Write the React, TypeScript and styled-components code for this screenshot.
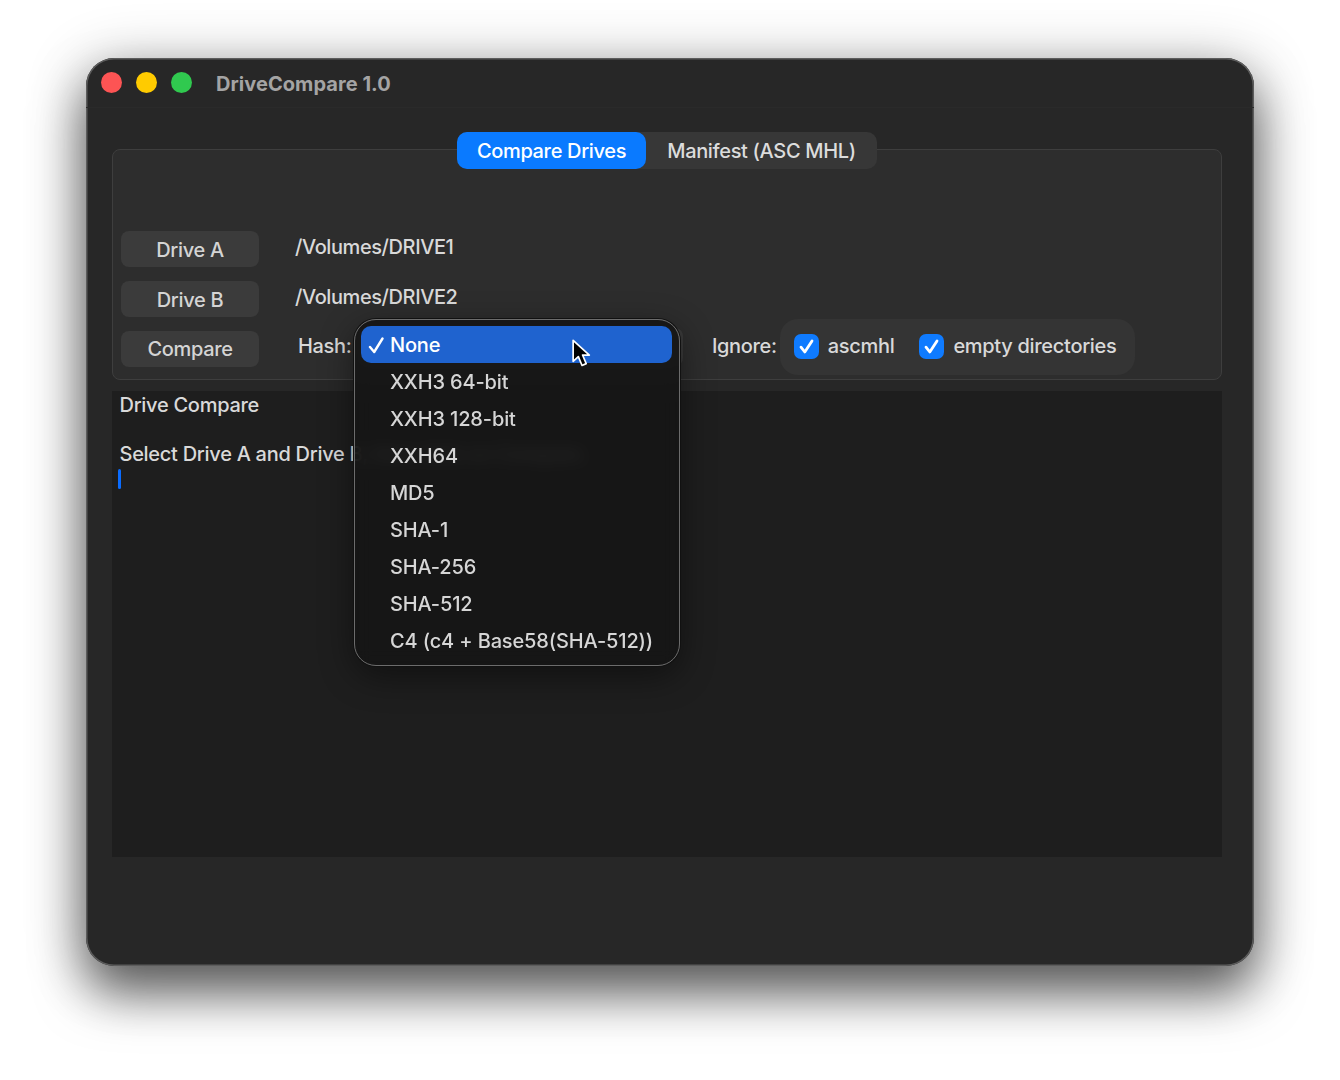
import styled, { createGlobalStyle } from "styled-components";

const GlobalStyle = createGlobalStyle`
    html, body {
        margin: 0;
        padding: 0;
        background: #fff;
        font-family: Inter, "Liberation Sans", sans-serif;
    }
`

const Page = styled.div`
    width: 1340px;
    height: 1080px;
    box-sizing: border-box;
    padding: 58px 86px 114px;
    overflow: hidden;
`

const Window = styled.div`
    height: 908px;
    box-sizing: border-box;
    background: #272727;
    border-radius: 28px;
    box-shadow: inset 0 0 0 1.5px #5c5c5c, 0 28px 50px rgba(0, 0, 0, 0.55), 0 8px 60px rgba(0, 0, 0, 0.3);
    color: #d9d9d9;
    font-size: 20px;
    font-weight: 450;
    letter-spacing: -0.34px;
`

const TitleBar = styled.div`
    height: 50px;
    box-sizing: border-box;
    display: flex;
    align-items: center;
    padding-left: 15px;
    border-bottom: 1px solid #2a2a2a;
`

const Light = styled.span<{ $color: string }>`
    width: 21px;
    height: 21px;
    border-radius: 50%;
    background: ${(p) => p.$color};
    margin-right: 14px;
`

const Title = styled.div`
    margin-left: 10px;
    margin-top: 3px;
    font-size: 20px;
    font-weight: 700;
    letter-spacing: 0.05px;
    color: #a4a4a4;
`

const Content = styled.div`
    padding: 24px 32px 0 26px;
`

const TabBar = styled.div`
    position: relative;
    z-index: 1;
    display: flex;
    justify-content: center;
    margin-bottom: -20px;
`

const TabGroup = styled.div`
    display: flex;
    background: #373737;
    border-radius: 10px;
`

const Tab = styled.div<{ $active?: boolean }>`
    width: ${(p) => (p.$active ? "189px" : "231px")};
    height: 37px;
    line-height: 39px;
    text-align: center;
    background: ${(p) => (p.$active ? "#0a7aff" : "transparent")};
    color: ${(p) => (p.$active ? "#fff" : "#dcdcdc")};
    border-radius: 10px;
`

const Panel = styled.div`
    height: 231px;
    box-sizing: border-box;
    padding: 81px 8px 0;
    background: #2d2d2d;
    border: 1px solid #3e3e3e;
    border-radius: 8px;
`

const Row = styled.div`
    display: flex;
    align-items: center;
    height: 36px;
    margin-bottom: 14px;
`

const ControlRow = styled(Row)`
    height: 56px;
    margin: -13px 0 0;
`

const PushButton = styled.div`
    width: 138px;
    height: 36px;
    line-height: 39px;
    text-align: center;
    background: #3b3b3b;
    color: #d4d4d4;
    border-radius: 8px;
    flex: none;
`

const LowerButton = styled(PushButton)`
    margin-top: 6px;
    line-height: 37px;
`

const PathText = styled.div`
    margin: -4px 0 0 36px;
    letter-spacing: -0.42px;
`

const HashLabel = styled.div`
    margin: 0 6.5px 0 39px;
`

const HashSelect = styled.div`
    position: relative;
    width: 325px;
    height: 38px;
    margin-top: 2px;
    background: #3a3a3a;
    border-radius: 8px;
`

const Popup = styled.div`
    position: absolute;
    z-index: 2;
    left: -4px;
    top: -9px;
    width: 326px;
    height: 347px;
    box-sizing: border-box;
    padding: 6px 7px 6px 6px;
    background: rgba(21, 21, 21, 0.9);
    backdrop-filter: blur(8px);
    border: 1.5px solid #6c6c6c;
    border-radius: 22px;
    box-shadow: 0 0 0 1px #111, 0 10px 34px rgba(0, 0, 0, 0.45);
    letter-spacing: -0.14px;
`

const MenuItem = styled.div<{ $selected?: boolean }>`
    position: relative;
    height: 37px;
    line-height: 39px;
    padding-left: 29px;
    border-radius: 10px;
    background: ${(p) => (p.$selected ? "#1f63cf" : "transparent")};
    color: ${(p) => (p.$selected ? "#fff" : "#d6d6d6")};
    white-space: nowrap;
`

const MenuCheck = styled.svg`
    position: absolute;
    left: 7px;
    top: 11px;
    width: 17px;
    height: 17px;
`

const Cursor = styled.svg`
    position: absolute;
    left: 215px;
    top: 18px;
    width: 23px;
    height: 32px;
`

const IgnoreLabel = styled.div`
    margin: 0 3px 0 29px;
`

const IgnoreGroup = styled.div`
    display: flex;
    align-items: center;
    height: 56px;
    box-sizing: border-box;
    margin: 2px 0 0 0;
    padding: 0 18px 2px 14px;
    background: #343434;
    border-radius: 18px;
    letter-spacing: -0.3px;
`

const Option = styled.label`
    display: flex;
    align-items: center;
    gap: 9px;
    & + & {
        margin-left: 25px;
    }
`

const CheckBox = styled.span`
    width: 25px;
    height: 25px;
    border-radius: 7px;
    background: #0f7bff;
    display: flex;
    align-items: center;
    justify-content: center;
`

const Log = styled.div`
    height: 466px;
    box-sizing: border-box;
    margin-top: 11px;
    padding: 2px 7.5px;
    background: #1e1e1e;
    line-height: 24.5px;
    letter-spacing: -0.28px;
`

const LogLine = styled.div`
    min-height: 24.5px;
`

const Caret = styled.div`
    width: 3px;
    height: 20px;
    margin: 2px 0 0 -1.5px;
    background: #0a6cff;
    border-radius: 1.5px;
`

const hashes = [
    "None",
    "XXH3 64-bit",
    "XXH3 128-bit",
    "XXH64",
    "MD5",
    "SHA-1",
    "SHA-256",
    "SHA-512",
    "C4 (c4 + Base58(SHA-512))",
]

const BoxTick = () => (
    <svg width="17" height="17" viewBox="0 0 17 17" fill="none">
        <path d="M3 9.2 L6.8 14 L14 3" stroke="#fff" strokeWidth="2.8" strokeLinecap="round" strokeLinejoin="round" />
    </svg>
)

export default function App() {
    return (
        <Page>
            <GlobalStyle />
            <Window>
                <TitleBar>
                    <Light $color="#fd5454" />
                    <Light $color="#ffcb00" />
                    <Light $color="#30c94f" />
                    <Title>DriveCompare 1.0</Title>
                </TitleBar>
                <Content>
                    <TabBar>
                        <TabGroup>
                            <Tab $active>Compare Drives</Tab>
                            <Tab>Manifest (ASC MHL)</Tab>
                        </TabGroup>
                    </TabBar>
                    <Panel>
                        <Row>
                            <PushButton>Drive A</PushButton>
                            <PathText>/Volumes/DRIVE1</PathText>
                        </Row>
                        <Row>
                            <PushButton>Drive B</PushButton>
                            <PathText>/Volumes/DRIVE2</PathText>
                        </Row>
                        <ControlRow>
                            <LowerButton>Compare</LowerButton>
                            <HashLabel>Hash:</HashLabel>
                            <HashSelect>
                                <Popup>
                                    {hashes.map((name, i) => (
                                        <MenuItem key={name} $selected={i === 0}>
                                            {i === 0 && (
                                                <MenuCheck viewBox="0 0 17 17" fill="none">
                                                    <path d="M2 10 L6.2 15 L14.5 1.5" stroke="#fff" strokeWidth="2.4" strokeLinecap="round" strokeLinejoin="round" />
                                                </MenuCheck>
                                            )}
                                            {name}
                                        </MenuItem>
                                    ))}
                                    <Cursor viewBox="0 0 22 30">
                                        <path
                                            d="M3 2 L3 22 L8 17.5 L11.5 26 L15.5 24.2 L12 16 L18.5 16 Z"
                                            fill="#000"
                                            stroke="#fff"
                                            strokeWidth="1.6"
                                            strokeLinejoin="round"
                                        />
                                    </Cursor>
                                </Popup>
                            </HashSelect>
                            <IgnoreLabel>Ignore:</IgnoreLabel>
                            <IgnoreGroup>
                                <Option>
                                    <CheckBox><BoxTick /></CheckBox>
                                    ascmhl
                                </Option>
                                <Option>
                                    <CheckBox><BoxTick /></CheckBox>
                                    empty directories
                                </Option>
                            </IgnoreGroup>
                        </ControlRow>
                    </Panel>
                    <Log>
                        <LogLine>Drive Compare</LogLine>
                        <LogLine />
                        <LogLine>Select Drive A and Drive B, then click on Compare.</LogLine>
                        <Caret />
                    </Log>
                </Content>
            </Window>
        </Page>
    )
}
